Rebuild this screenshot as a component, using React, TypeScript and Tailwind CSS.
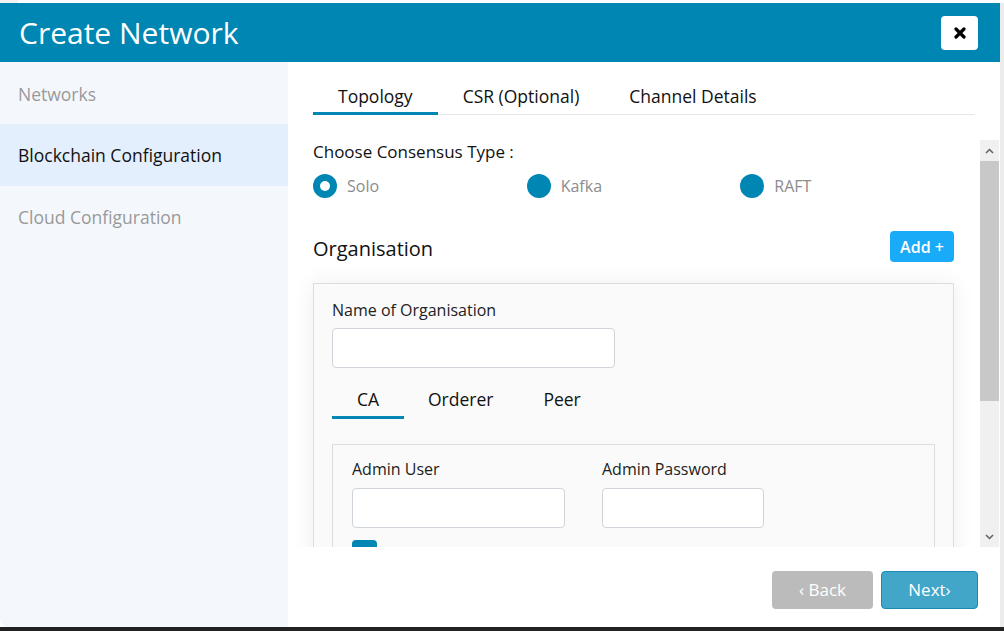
import React from "react";

const font = { fontFamily: '"Open Sans", "Noto Sans", sans-serif' };

function Radio({ label, checked }: { label: string; checked?: boolean }) {
  return (
    <div className="flex items-center gap-[10px]">
      <div className="w-[24px] h-[24px] rounded-full bg-[#0086b3] flex items-center justify-center">
        {checked && <div className="w-[10px] h-[10px] rounded-full bg-white" />}
      </div>
      <span className="text-[16px] text-[#8c8c8c]">{label}</span>
    </div>
  );
}

export default function App() {
  return (
    <div style={font} className="w-[1004px] h-[631px] flex flex-col bg-white overflow-hidden">
      <div className="h-[3px] flex">
        <div className="w-[18px] bg-[#f2f2f2]" />
        <div className="flex-1 bg-white" />
      </div>
      <div className="flex h-[624px]">
        <div className="w-[1000px] flex flex-col">
          {/* Header */}
          <div className="h-[59px] bg-[#0086b3] flex items-center justify-between pl-[19px] pr-[22px]">
            <span className="text-white text-[30px] leading-none">Create Network</span>
            <button className="w-[37px] h-[34px] bg-white rounded-[4px] flex items-center justify-center">
              <svg width="12" height="12" viewBox="0 0 12 12">
                <path d="M2 2 L10 10 M10 2 L2 10" stroke="#000" strokeWidth="3.2" strokeLinecap="round" />
              </svg>
            </button>
          </div>
          {/* Body */}
          <div className="flex flex-1 min-h-0">
            {/* Sidebar */}
            <div className="w-[288px] bg-[#f4f8fd] rounded-bl-[8px] flex flex-col">
              <div className="h-[62px] flex items-center pl-[18px] pt-[3px] text-[17.5px] text-[#999999]">Networks</div>
              <div className="h-[62px] flex items-center pl-[18px] text-[17.5px] text-[#111] bg-[#e3effd]">Blockchain Configuration</div>
              <div className="h-[62px] flex items-center pl-[18px] text-[17.5px] text-[#999999]">Cloud Configuration</div>
            </div>
            {/* Main */}
            <div className="flex-1 bg-white flex flex-col min-w-0">
              {/* Tabs */}
              <div className="mx-[25px] mt-[18px] h-[35px] flex border-b border-[#e6e6e6]">
                <div className="px-[25px] pt-[3px] text-[17.5px] text-[#111] border-b-[3px] border-[#0086b3] -mb-[1px]">Topology</div>
                <div className="px-[25px] pt-[3px] text-[17.5px] text-[#111]">CSR (Optional)</div>
                <div className="px-[25px] pt-[3px] text-[17.5px] text-[#111]">Channel Details</div>
              </div>
              {/* Scroll area */}
              <div className="mt-[25px] h-[407px] flex">
                <div className="flex-1 overflow-hidden pl-[25px] pr-[26px]">
                  <div className="text-[17px] leading-[24px] text-[#111]">Choose Consensus Type :</div>
                  <div className="grid grid-cols-3 mt-[10px]">
                    <Radio label="Solo" checked />
                    <Radio label="Kafka" />
                    <Radio label="RAFT" />
                  </div>
                  <div className="flex items-start justify-between mt-[33px]">
                    <span className="text-[20px] leading-[30px] mt-[3px] text-[#111]">Organisation</span>
                    <button className="w-[64px] h-[31px] bg-[#19aaf8] rounded-[4px] text-white text-[16px] font-semibold">Add +</button>
                  </div>
                  <div className="mt-[19px] bg-[#fafafa] border border-[#dddddd] shadow-[0_0_22px_rgba(0,0,0,0.07)] px-[18px] pt-[14px] pb-[20px]">
                    <div className="text-[16px] text-[#222]">Name of Organisation</div>
                    <div className="mt-[6px] w-[283px] h-[40px] bg-white border border-[#cfd4da] rounded-[4px]" />
                    <div className="mt-[18px] flex h-[33px]">
                      <div className="w-[72px] text-center text-[17.5px] text-[#111] border-b-[3px] border-[#0086b3]">CA</div>
                      <div className="ml-[24px] text-[17.5px] text-[#111]">Orderer</div>
                      <div className="ml-[50px] text-[17.5px] text-[#111]">Peer</div>
                    </div>
                    <div className="mt-[25px] border border-[#dddddd] bg-[#fafafa] px-[19px] pt-[12px] pb-[20px]">
                      <div className="flex gap-[37px]">
                        <div>
                          <div className="text-[16px] text-[#222]">Admin User</div>
                          <div className="mt-[7px] w-[213px] h-[40px] bg-white border border-[#cfd4da] rounded-[4px]" />
                        </div>
                        <div>
                          <div className="text-[16px] text-[#222]">Admin Password</div>
                          <div className="mt-[7px] w-[162px] h-[40px] bg-white border border-[#cfd4da] rounded-[4px]" />
                        </div>
                      </div>
                      <div className="mt-[12px] flex items-start gap-[10px]">
                        <div className="w-[25px] h-[25px] rounded-[4px] bg-[#0086b3]" />
                        <span className="mt-[5px] text-[16px] text-[#222]">Use Intermediate CA</span>
                      </div>
                    </div>
                  </div>
                </div>
                {/* Scrollbar drawing */}
                <div className="w-[19px] bg-[#f0f0f0] flex flex-col mr-[1px]">
                  <div className="h-[21px] flex items-center justify-center">
                    <svg width="9" height="6" viewBox="0 0 9 6"><path d="M1 5 L4.5 1.5 L8 5" stroke="#606060" strokeWidth="1.5" fill="none" /></svg>
                  </div>
                  <div className="h-[240px] bg-[#c8c8c8]" />
                  <div className="flex-1" />
                  <div className="h-[21px] flex items-center justify-center">
                    <svg width="9" height="6" viewBox="0 0 9 6"><path d="M1 1 L4.5 4.5 L8 1" stroke="#606060" strokeWidth="1.5" fill="none" /></svg>
                  </div>
                </div>
              </div>
              {/* Footer */}
              <div className="flex-1 flex justify-end items-start pt-[24px] pr-[22px] gap-[8px]">
                <button className="w-[101px] h-[38px] rounded-[4px] bg-[#bbbbbb] text-white text-[17px]">‹ Back</button>
                <button className="w-[97px] h-[38px] rounded-[4px] bg-[#41a6c8] border border-[#1a89b3] text-white text-[17px]">Next›</button>
              </div>
            </div>
          </div>
        </div>
        <div className="flex-1 bg-[#ececec]" />
      </div>
      <div className="h-[4px] bg-[#222]" />
    </div>
  );
}
